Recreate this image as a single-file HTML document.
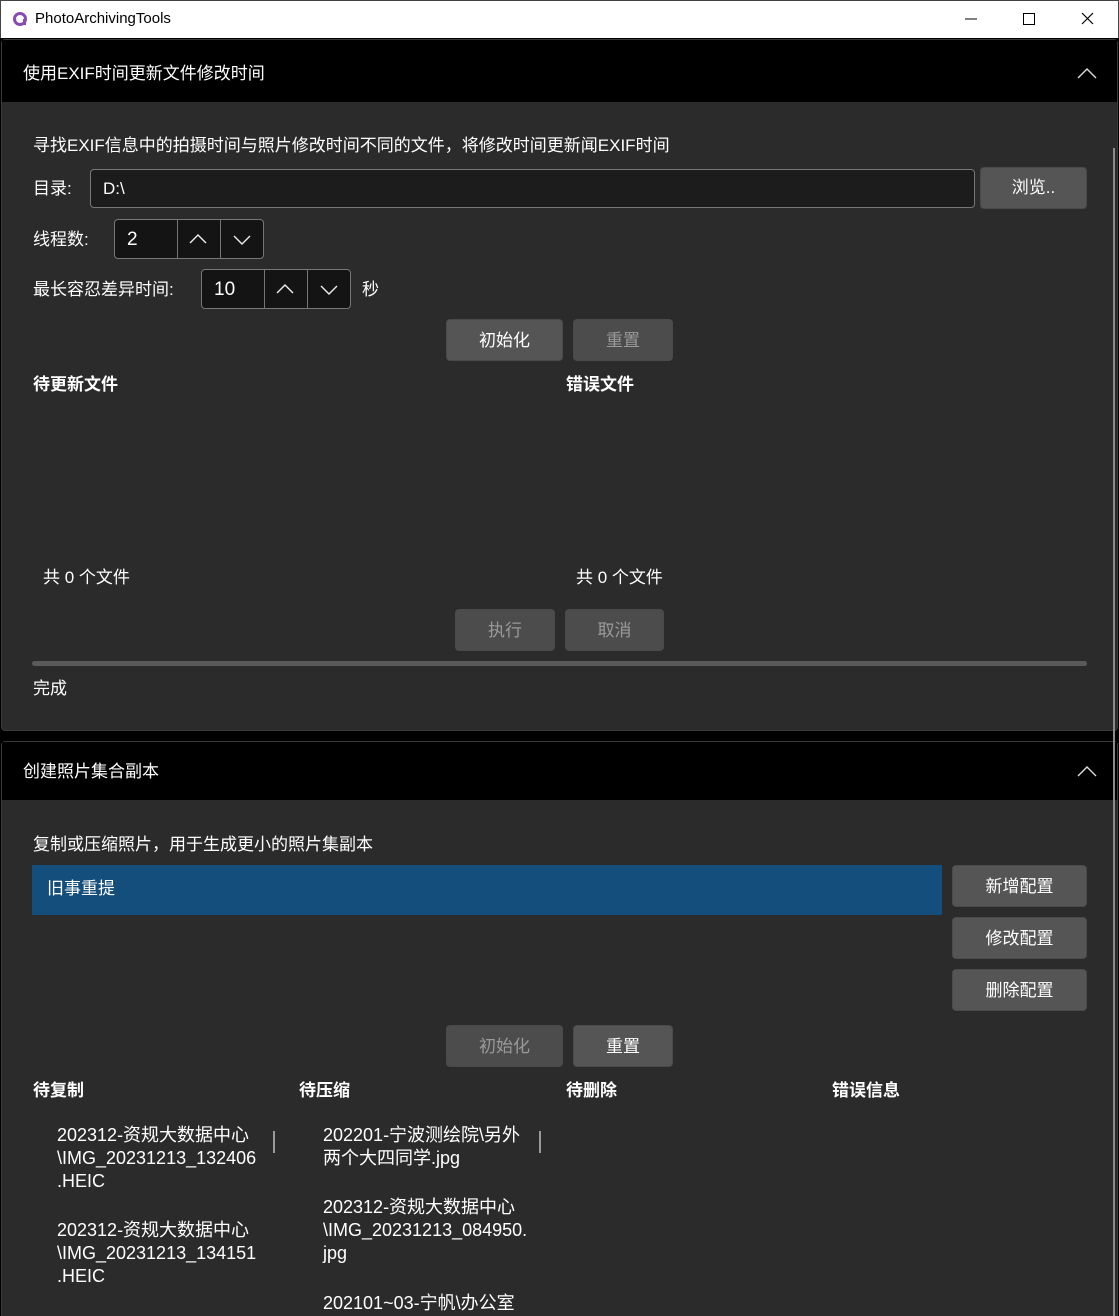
<!DOCTYPE html>
<html><head><meta charset="utf-8"><style>
*{margin:0;padding:0;box-sizing:border-box}
html,body{width:1119px;height:1316px;overflow:hidden}
body{background:#000;position:relative;font-family:"Liberation Sans","Noto Sans CJK SC",sans-serif;color:#fff;font-size:17px}
.a{position:absolute;white-space:nowrap}
.t{line-height:24px}
.btn{position:absolute;background:#555;border:1px solid #4a4a4a;border-radius:4px;text-align:center;color:#fff;font-size:17px}
.dis{background:#4c4c4c;color:#9a9a9a}
.b{font-weight:bold}
</style></head><body>
<div class="a" style="left:0;top:0;width:1119px;height:38px;background:#fff;border:1px solid #444;border-bottom:none"></div>
<svg class="a" style="left:12px;top:11px" width="16" height="16" viewBox="0 0 16 16"><circle cx="8" cy="8" r="5.5" fill="none" stroke="#8a4ab5" stroke-width="3"/><rect x="11" y="8" width="3" height="6" fill="#8a4ab5"/></svg>
<div class="a" style="left:35px;top:9px;font-size:15px;color:#000;line-height:20px">PhotoArchivingTools</div>
<svg class="a" style="left:960px;top:10px" width="140" height="18" viewBox="0 0 140 18"><line x1="5" y1="9" x2="17" y2="9" stroke="#000"/><rect x="63.5" y="3.5" width="11" height="11" fill="none" stroke="#000"/><path d="M122 3L133 14M133 3L122 14" stroke="#000" stroke-width="1.2"/></svg>

<div class="a" style="left:1px;top:39px;width:1117px;height:692px;background:#2b2b2b;border:1px solid #3a3a3a;border-radius:4px"></div>
<div class="a" style="left:2px;top:40px;width:1115px;height:62px;background:#000"></div>
<div class="a t" style="left:23px;top:62px">使用EXIF时间更新文件修改时间</div>
<svg class="a" style="left:1076px;top:66px" width="22" height="14"><path d="M2 12L11 3L20 12" fill="none" stroke="#ddd" stroke-width="1.4"/></svg>
<div class="a t" style="left:33px;top:134px">寻找EXIF信息中的拍摄时间与照片修改时间不同的文件，将修改时间更新闻EXIF时间</div>
<div class="a t" style="left:33px;top:177px">目录:</div>
<div class="a" style="left:90px;top:169px;width:885px;height:39px;background:#1c1c1c;border:1px solid #777;border-radius:4px"></div>
<div class="a t" style="left:103px;top:177px">D:\</div>
<div class="btn" style="left:980px;top:167px;width:107px;height:42px;line-height:40px">浏览..</div>
<div class="a t" style="left:33px;top:228px">线程数:</div>
<div class="a" style="left:114px;top:219px;width:150px;height:40px;background:#141414;border:1px solid #777;border-radius:4px"></div>
<div class="a" style="left:177px;top:220px;width:1px;height:38px;background:#777"></div>
<div class="a" style="left:220px;top:220px;width:1px;height:38px;background:#777"></div>
<div class="a t" style="left:127px;top:228px;font-size:19px">2</div>
<svg class="a" style="left:186px;top:230px" width="70" height="18"><path d="M4 13L12 5L20 13M48 6L56 14L64 6" fill="none" stroke="#eee" stroke-width="1.4"/></svg>
<div class="a t" style="left:33px;top:278px">最长容忍差异时间:</div>
<div class="a" style="left:201px;top:269px;width:150px;height:40px;background:#141414;border:1px solid #777;border-radius:4px"></div>
<div class="a" style="left:264px;top:270px;width:1px;height:38px;background:#777"></div>
<div class="a" style="left:307px;top:270px;width:1px;height:38px;background:#777"></div>
<div class="a t" style="left:214px;top:278px;font-size:19px">10</div>
<svg class="a" style="left:273px;top:280px" width="70" height="18"><path d="M4 13L12 5L20 13M48 6L56 14L64 6" fill="none" stroke="#eee" stroke-width="1.4"/></svg>
<div class="a t" style="left:362px;top:278px">秒</div>
<div class="btn" style="left:446px;top:319px;width:117px;height:42px;line-height:42px">初始化</div>
<div class="btn dis" style="left:573px;top:319px;width:100px;height:42px;line-height:42px">重置</div>
<div class="a t b" style="left:33px;top:373px">待更新文件</div>
<div class="a t b" style="left:566px;top:373px">错误文件</div>
<div class="a t" style="left:43px;top:566px">共 0 个文件</div>
<div class="a t" style="left:576px;top:566px">共 0 个文件</div>
<div class="btn dis" style="left:455px;top:609px;width:100px;height:42px;line-height:42px">执行</div>
<div class="btn dis" style="left:565px;top:609px;width:99px;height:42px;line-height:42px">取消</div>
<div class="a" style="left:32px;top:661px;width:1055px;height:5px;background:#5a5a5a;border-radius:3px"></div>
<div class="a t" style="left:33px;top:677px">完成</div>

<div class="a" style="left:1px;top:741px;width:1117px;height:575px;background:#2b2b2b;border:1px solid #3a3a3a;border-bottom:none;border-radius:4px 4px 0 0"></div>
<div class="a" style="left:2px;top:742px;width:1115px;height:58px;background:#000"></div>
<div class="a t" style="left:23px;top:760px">创建照片集合副本</div>
<svg class="a" style="left:1076px;top:764px" width="22" height="14"><path d="M2 12L11 3L20 12" fill="none" stroke="#ddd" stroke-width="1.4"/></svg>
<div class="a t" style="left:33px;top:833px">复制或压缩照片，用于生成更小的照片集副本</div>
<div class="a" style="left:32px;top:865px;width:910px;height:50px;background:#134e7c"></div>
<div class="a t" style="left:47px;top:877px">旧事重提</div>
<div class="btn" style="left:952px;top:865px;width:135px;height:42px;line-height:42px">新增配置</div>
<div class="btn" style="left:952px;top:917px;width:135px;height:42px;line-height:42px">修改配置</div>
<div class="btn" style="left:952px;top:969px;width:135px;height:42px;line-height:42px">删除配置</div>
<div class="btn dis" style="left:446px;top:1025px;width:117px;height:42px;line-height:42px">初始化</div>
<div class="btn" style="left:573px;top:1025px;width:100px;height:42px;line-height:42px">重置</div>
<div class="a t b" style="left:33px;top:1079px">待复制</div>
<div class="a t b" style="left:299px;top:1079px">待压缩</div>
<div class="a t b" style="left:566px;top:1079px">待删除</div>
<div class="a t b" style="left:832px;top:1079px">错误信息</div>
<div class="a" style="left:57px;top:1124px;line-height:23px;font-size:18px">202312-资规大数据中心<br>\IMG_20231213_132406<br>.HEIC</div>
<div class="a" style="left:57px;top:1219px;line-height:23px;font-size:18px">202312-资规大数据中心<br>\IMG_20231213_134151<br>.HEIC</div>
<div class="a" style="left:323px;top:1124px;line-height:23px;font-size:18px">202201-宁波测绘院\另外<br>两个大四同学.jpg</div>
<div class="a" style="left:323px;top:1196px;line-height:23px;font-size:18px">202312-资规大数据中心<br>\IMG_20231213_084950.<br>jpg</div>
<div class="a" style="left:323px;top:1292px;line-height:23px;font-size:18px">202101~03-宁帆\办公室</div>
<div class="a" style="left:273px;top:1131px;width:2px;height:22px;background:#999"></div>
<div class="a" style="left:539px;top:1131px;width:2px;height:22px;background:#999"></div>
<div class="a" style="left:1113px;top:148px;width:2px;height:1168px;background:#8a8a8a"></div>
</body></html>
